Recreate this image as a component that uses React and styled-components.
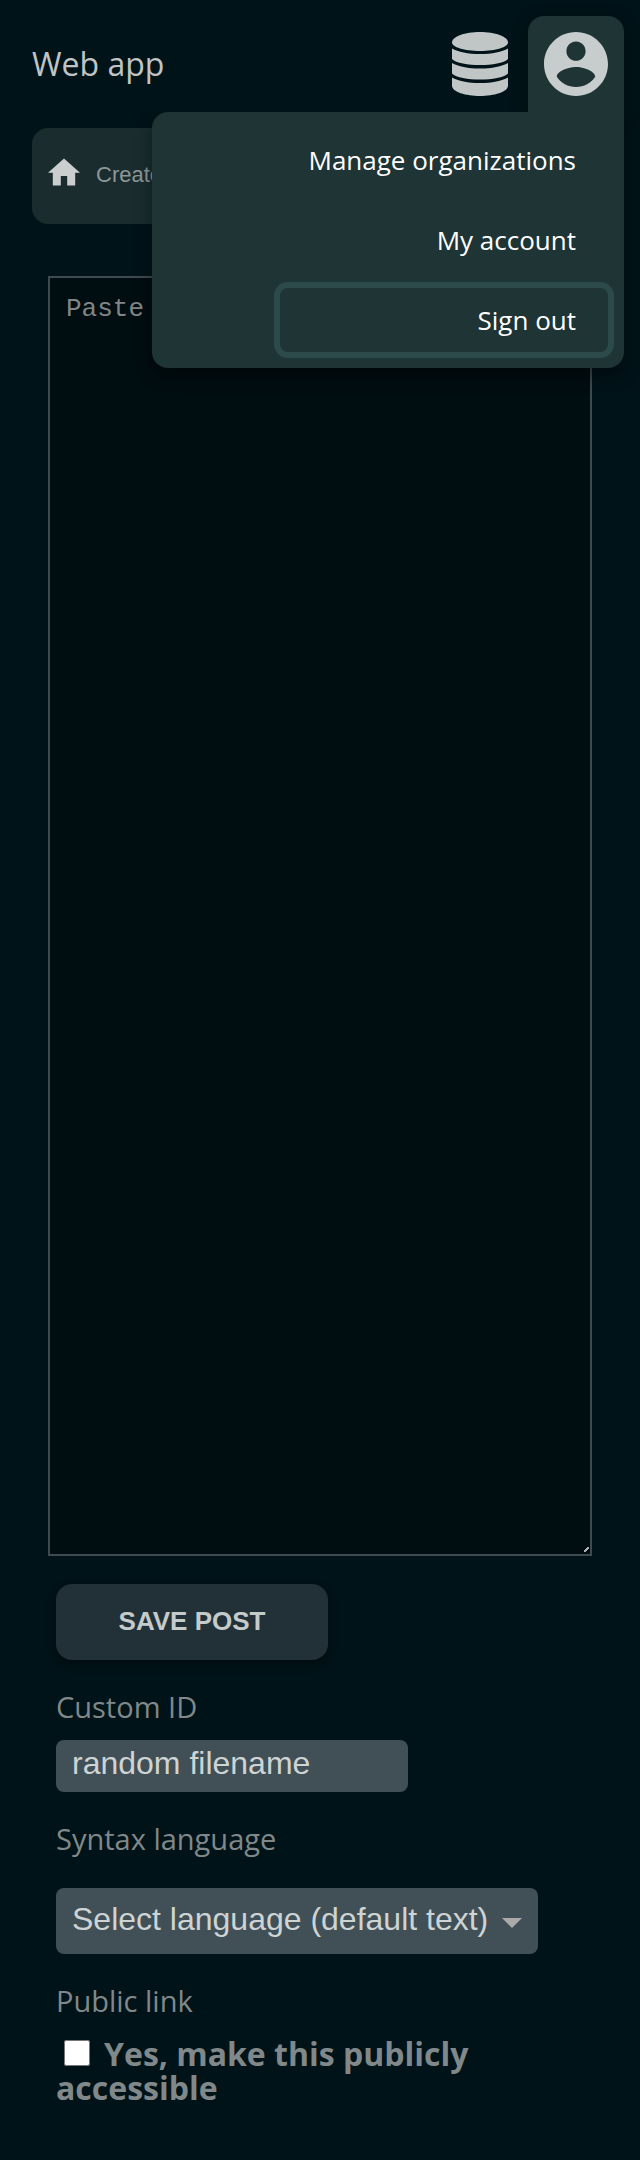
import React from "react";
import styled, { createGlobalStyle } from "styled-components";

const GlobalStyle = createGlobalStyle`
  * { box-sizing: border-box; }
  body {
    margin: 0;
    background: #001318;
    color: #808889;
    font-family: "Open Sans", sans-serif;
    font-size: 29px;
  }
`;

const Page = styled.div`
  padding: 16px 16px 56px;
`;

const Header = styled.header`
  display: flex;
  align-items: center;
  height: 96px;
  padding-left: 16px;
`;

const Brand = styled.a`
  margin-right: auto;
  color: #c0c4c5;
  font-size: 32px;
  line-height: 44px;
  text-decoration: none;
`;

const IconButton = styled.button`
  display: grid;
  place-items: center;
  width: 96px;
  height: 96px;
  padding: 0;
  border: 0;
  border-radius: 16px 16px 0 0;
  background: ${(p) => (p.$open ? "#1e3435" : "transparent")};
  color: ${(p) => (p.$open ? "#c7cccc" : "#c0c5c5")};
  box-shadow: ${(p) => (p.$open ? "0 4px 16px rgba(0, 0, 0, 0.4)" : "none")};
`;

const MenuAnchor = styled.div`
  position: relative;
`;

const Menu = styled.nav`
  position: absolute;
  z-index: 2;
  top: 96px;
  right: 0;
  display: flex;
  flex-direction: column;
  align-items: flex-end;
  gap: 16px;
  width: 472px;
  padding: 16px;
  border-radius: 16px 0 16px 16px;
  background: #1e3435;
  box-shadow: 0 8px 16px rgba(0, 0, 0, 0.4);
  clip-path: inset(0 -32px -32px -32px);
`;

const MenuItem = styled.a`
  display: block;
  min-width: 328px;
  padding: 16px 32px;
  border-radius: 8px;
  color: #fff;
  font-size: 26px;
  line-height: 32px;
  text-align: right;
  text-decoration: none;
  box-shadow: ${(p) => (p.$focused ? "0 0 0 6px #2c4a4a" : "none")};
`;

const Crumbs = styled.nav`
  display: flex;
  align-items: center;
  gap: 16px;
  height: 96px;
  margin: 16px 16px 52px;
  padding: 0 16px 2px;
  border-radius: 16px;
  background: #1a2c2e;
  color: #8d9797;
  font-family: "Liberation Sans", sans-serif;
  font-size: 22px;
  line-height: 26px;
`;

const HomeLink = styled.a`
  display: flex;
  padding-bottom: 6px;
  color: #cacecf;
`;

const Form = styled.form`
  display: flex;
  flex-direction: column;
  align-items: flex-start;
  margin: 0 32px;
`;

const Editor = styled.textarea`
  width: 100%;
  height: 1280px;
  padding: 16px;
  border: 2px solid #40494d;
  border-radius: 0;
  background: #000d11;
  color: #c0c4c5;
  font-family: "Liberation Mono", monospace;
  font-size: 26px;
  line-height: 30px;
  &::placeholder { color: #808687; }
  &::-webkit-resizer {
    background: linear-gradient(135deg, transparent 38%, #b0b0b0 38%, #b0b0b0 62%, transparent 62%)
      9px 8px / 5px 5px no-repeat;
  }
`;

const Fields = styled.div`
  display: flex;
  flex-direction: column;
  align-items: flex-start;
  margin: 28px 8px 0;
`;

const SaveButton = styled.button`
  width: 272px;
  height: 76px;
  padding: 0 0 2px;
  border: 0;
  border-radius: 16px;
  background: #213137;
  color: #c5cacb;
  font: bold 26px/30px "Liberation Sans", sans-serif;
  box-shadow: 0 4px 8px rgba(0, 0, 0, 0.4);
`;

const Label = styled.label`
  margin-top: 28px;
  font-size: 29px;
  line-height: 38px;
`;

const TextField = styled.input`
  width: 352px;
  height: 52px;
  margin-top: 14px;
  padding: 0 16px 6px;
  border: 0;
  border-radius: 8px;
  background: #415056;
  color: #ced3d4;
  font: 32px "Liberation Sans", sans-serif;
  &::placeholder { color: #ced3d4; opacity: 1; }
`;

const SelectWrap = styled.div`
  position: relative;
  margin-top: 30px;
`;

const Select = styled.select`
  appearance: none;
  display: block;
  height: 66px;
  padding: 0 49px 4px 16px;
  border: 0;
  border-radius: 8px;
  background: #415056;
  color: #ced3d4;
  font: 32px "Liberation Sans", sans-serif;
`;

const Caret = styled.svg`
  position: absolute;
  right: 16px;
  top: 30px;
  pointer-events: none;
`;

const CheckLabel = styled.label`
  margin-top: 17px;
  font-size: 32px;
  font-weight: 700;
  line-height: 34px;
`;

const Checkbox = styled.input`
  width: 26px;
  height: 26px;
  margin: 0 14px 0 8px;
`;

const DatabaseIcon = () => (
  <svg width="56" height="64" viewBox="0 0 56 64" fill="currentColor" aria-hidden="true">
    <path d="M28 0C43 0 56 4.500 56 10.500C56 15 44 19 28 19S0 15 0 10.500C0 4.500 13 0 28 0Z" />
    <path d="M0 16.500C6 20 16 22 28 22S50 20 56 16.500V27C52 31 40 33 28 33S4 31 0 27Z" />
    <path d="M0 31C6 34.500 16 36.500 28 36.500S50 34.500 56 31V41.500C52 45.500 40 47.500 28 47.500S4 45.500 0 41.500Z" />
    <path d="M0 45.500C6 49 16 51 28 51S50 49 56 45.500V53.500C56 60 42 64 28 64S0 60 0 53.500Z" />
  </svg>
);

const AccountIcon = () => (
  <svg width="64" height="64" viewBox="2 2 20 20" fill="currentColor" aria-hidden="true">
    <path d="M12 2C6.480 2 2 6.480 2 12s4.480 10 10 10 10-4.480 10-10S17.520 2 12 2zm0 3c1.660 0 3 1.340 3 3s-1.340 3-3 3-3-1.340-3-3 1.340-3 3-3zm0 14.200c-2.500 0-4.710-1.280-6-3.220.03-1.990 4-3.080 6-3.080 1.990 0 5.970 1.090 6 3.080-1.290 1.940-3.500 3.220-6 3.220z" />
  </svg>
);

const HomeIcon = () => (
  <svg width="32" height="32" viewBox="2 1.5 20 20" fill="currentColor" aria-hidden="true">
    <path d="M10 20v-6h4v6h5v-8h3L12 3 2 12h3v8z" />
  </svg>
);

export default function App() {
  return (
    <Page>
      <GlobalStyle />
      <Header>
        <Brand href="#">Web app</Brand>
        <IconButton type="button" aria-label="Databases"><DatabaseIcon /></IconButton>
        <MenuAnchor>
          <IconButton type="button" $open aria-label="Account" aria-expanded="true"><AccountIcon /></IconButton>
          <Menu>
            <MenuItem href="#organizations">Manage organizations</MenuItem>
            <MenuItem href="#account">My account</MenuItem>
            <MenuItem href="#signout" $focused>Sign out</MenuItem>
          </Menu>
        </MenuAnchor>
      </Header>
      <Crumbs>
        <HomeLink href="#home" aria-label="Home"><HomeIcon /></HomeLink>
        <span>Create</span>
      </Crumbs>
      <Form>
        <Editor aria-label="Post content" placeholder="Paste" />
        <Fields>
          <SaveButton type="button">SAVE POST</SaveButton>
          <Label htmlFor="custom-id">Custom ID</Label>
          <TextField id="custom-id" placeholder="random filename" />
          <Label htmlFor="language">Syntax language</Label>
          <SelectWrap>
            <Select id="language">
              <option>Select language (default text)</option>
            </Select>
            <Caret width="20" height="10" viewBox="0 0 20 10" fill="#aaa"><path d="M0 0H20L10 10Z" /></Caret>
          </SelectWrap>
          <Label htmlFor="public">Public link</Label>
          <CheckLabel>
            <Checkbox id="public" type="checkbox" />
            Yes, make this publicly accessible
          </CheckLabel>
        </Fields>
      </Form>
    </Page>
  );
}
